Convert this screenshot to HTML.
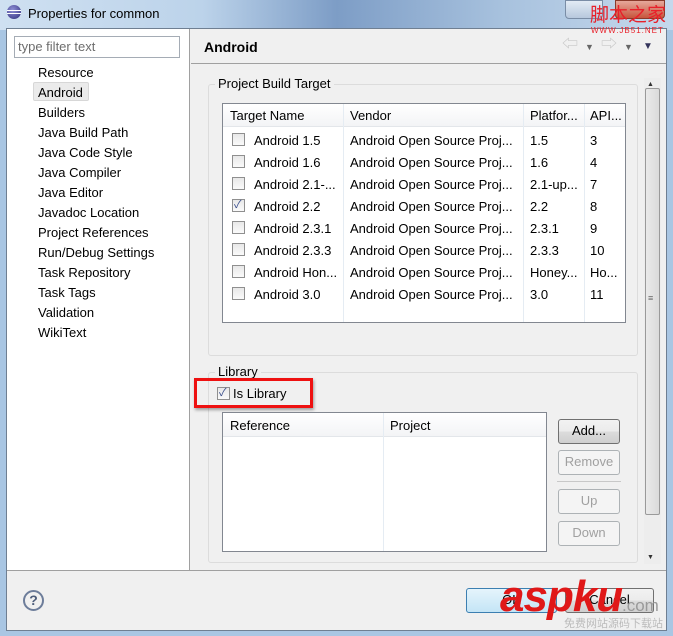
<!DOCTYPE html>
<html><head><style>
*{margin:0;padding:0;box-sizing:border-box}
body{width:673px;height:636px;overflow:hidden;background:#a9c6e3;font-family:"Liberation Sans","Noto Sans CJK SC",sans-serif;font-size:13px;color:#000;position:relative}
.a{position:absolute}
.t{position:absolute;white-space:nowrap;line-height:16px}
.cb{position:absolute;width:13px;height:13px;border:1px solid #8f8f8f;background:linear-gradient(#e8e8e8,#fafafa)}
.btn{position:absolute;border:1px solid #707070;border-radius:3px;background:linear-gradient(#f2f2f2 0%,#ebebeb 50%,#dcdcdc 51%,#cfcfcf);text-align:center;line-height:22px}
.dis{border-color:#adb2b5;background:#f4f4f4;color:#a0a0a0}
.z{z-index:5}
</style></head><body>
<div class="a" style="left:0;top:0;width:673px;height:30px;background:linear-gradient(90deg,#cfe0f1 0%,#bcd3ea 30%,#7d9dc6 50%,#a8c2de 75%,#c5d8ec 100%)"></div>
<div class="a" style="left:7px;top:5px;width:14px;height:14px;border-radius:50%;background:radial-gradient(circle at 40% 35%,#8f8fd6,#2c2c7a);"></div>
<div class="a" style="left:7px;top:10px;width:14px;height:1px;background:#fff"></div>
<div class="a" style="left:7px;top:13px;width:14px;height:1px;background:#fff"></div>
<div class="t" style="left:28px;top:6px;font-size:13px">Properties for common</div>
<div class="a" style="left:565px;top:0;width:38px;height:19px;border:1px solid #7a8da6;border-radius:0 0 4px 4px;background:linear-gradient(#e2ebf5,#b7c8dd)"></div>
<div class="a" style="left:615px;top:0;width:50px;height:19px;border:1px solid #8a3a2a;border-radius:0 0 4px 4px;background:linear-gradient(#e6a89a,#c8553d)"></div>
<!-- dialog body -->
<div class="a" style="left:6px;top:28px;width:661px;height:603px;background:#f0f0f0;border:1px solid #6f7f92"></div>
<div class="t z" style="left:590px;top:3px;font-size:19px;color:#e8202a;font-family:'Noto Sans CJK SC',sans-serif;line-height:22px">脚本之家</div>
<div class="t z" style="left:591px;top:26px;font-size:8px;color:#e8202a;letter-spacing:1px;line-height:9px">WWW.JB51.NET</div>
<!-- left panel -->
<div class="a" style="left:7px;top:29px;width:183px;height:541px;background:#fff;border-right:1px solid #a0a0a0"></div>
<div class="a" style="left:14px;top:36px;width:166px;height:22px;border:1px solid #a5acb5;background:#fff"></div>
<div class="t" style="left:18px;top:39px;color:#6d6d6d">type filter text</div>
<div class="a" style="left:33px;top:82px;width:56px;height:19px;background:#ebebeb;border:1px solid #d7d7d7;border-radius:2px"></div>
<div class="t" style="left:38px;top:63px;line-height:20px">Resource<br>Android<br>Builders<br>Java Build Path<br>Java Code Style<br>Java Compiler<br>Java Editor<br>Javadoc Location<br>Project References<br>Run/Debug Settings<br>Task Repository<br>Task Tags<br>Validation<br>WikiText</div>
<!-- right header -->
<div class="t" style="left:204px;top:39px;font-weight:bold;font-size:14px">Android</div>
<div class="t" style="left:562px;top:37px;color:#c8c8c8;font-size:16px">⇦</div>
<div class="t" style="left:585px;top:39px;color:#666;font-size:9px">▼</div>
<div class="t" style="left:601px;top:37px;color:#c8c8c8;font-size:16px">⇨</div>
<div class="t" style="left:624px;top:39px;color:#666;font-size:9px">▼</div>
<div class="t" style="left:643px;top:39px;color:#33335a;font-size:10px">▼</div>
<div class="a" style="left:191px;top:63px;width:475px;height:1px;background:#a0a0a0"></div>
<!-- scrollbar -->
<div class="a" style="left:644px;top:78px;width:17px;height:486px;background:#ededed"></div>
<div class="t" style="left:647px;top:77px;font-size:7px;color:#333">▲</div>
<div class="t" style="left:647px;top:550px;font-size:7px;color:#333">▼</div>
<div class="a" style="left:645px;top:88px;width:15px;height:427px;border:1px solid #9a9a9a;border-radius:2px;background:linear-gradient(90deg,#eaeaea,#dadada)"></div>
<div class="t" style="left:648px;top:290px;font-size:9px;color:#666">≡</div>
<!-- group 1 -->
<div class="a" style="left:208px;top:84px;width:430px;height:272px;border:1px solid #dcdcdc;border-radius:3px"></div>
<div class="t" style="left:215px;top:76px;background:#f0f0f0;padding:0 3px">Project Build Target</div>
<div class="a" style="left:222px;top:103px;width:404px;height:220px;border:1px solid #828790;background:#fff"></div>
<div class="a" style="left:223px;top:104px;width:402px;height:23px;background:linear-gradient(#fff,#f3f4f6);border-bottom:1px solid #e3e6ea"></div>
<div class="a" style="left:343px;top:104px;width:1px;height:218px;background:#e5ecf3"></div>
<div class="a" style="left:523px;top:104px;width:1px;height:218px;background:#e5ecf3"></div>
<div class="a" style="left:584px;top:104px;width:1px;height:218px;background:#e5ecf3"></div>
<div class="t" style="left:230px;top:108px">Target Name</div>
<div class="t" style="left:350px;top:108px">Vendor</div>
<div class="t" style="left:530px;top:108px">Platfor...</div>
<div class="t" style="left:590px;top:108px">API...</div>
<div class="t" style="left:254px;top:130px;line-height:22px">Android 1.5<br>Android 1.6<br>Android 2.1-...<br>Android 2.2<br>Android 2.3.1<br>Android 2.3.3<br>Android Hon...<br>Android 3.0</div>
<div class="t" style="left:350px;top:130px;line-height:22px">Android Open Source Proj...<br>Android Open Source Proj...<br>Android Open Source Proj...<br>Android Open Source Proj...<br>Android Open Source Proj...<br>Android Open Source Proj...<br>Android Open Source Proj...<br>Android Open Source Proj...</div>
<div class="t" style="left:530px;top:130px;line-height:22px">1.5<br>1.6<br>2.1-up...<br>2.2<br>2.3.1<br>2.3.3<br>Honey...<br>3.0</div>
<div class="t" style="left:590px;top:130px;line-height:22px">3<br>4<br>7<br>8<br>9<br>10<br>Ho...<br>11</div>
<div class="cb" style="left:232px;top:133px"></div>
<div class="cb" style="left:232px;top:155px"></div>
<div class="cb" style="left:232px;top:177px"></div>
<div class="cb" style="left:232px;top:199px"><span class="t" style="left:1px;top:-3px;font-size:11px;color:#3a4e8c">✓</span></div>
<div class="cb" style="left:232px;top:221px"></div>
<div class="cb" style="left:232px;top:243px"></div>
<div class="cb" style="left:232px;top:265px"></div>
<div class="cb" style="left:232px;top:287px"></div>
<!-- group 2 -->
<div class="a" style="left:208px;top:372px;width:430px;height:191px;border:1px solid #dcdcdc;border-radius:3px"></div>
<div class="t" style="left:215px;top:364px;background:#f0f0f0;padding:0 3px">Library</div>
<div class="a" style="left:194px;top:378px;width:119px;height:30px;border:3px solid #ee1111;box-shadow:1px 2px 3px rgba(0,0,0,.35)"></div>
<div class="cb" style="left:217px;top:387px"><span class="t" style="left:1px;top:-3px;font-size:11px;color:#3a4e8c">✓</span></div>
<div class="t" style="left:233px;top:386px">Is Library</div>
<div class="a" style="left:222px;top:412px;width:325px;height:140px;border:1px solid #828790;background:#fff"></div>
<div class="a" style="left:223px;top:413px;width:323px;height:24px;background:linear-gradient(#fff,#f3f4f6);border-bottom:1px solid #e3e6ea"></div>
<div class="a" style="left:383px;top:413px;width:1px;height:138px;background:#e5ecf3"></div>
<div class="t" style="left:230px;top:418px">Reference</div>
<div class="t" style="left:390px;top:418px">Project</div>
<div class="btn" style="left:558px;top:419px;width:62px;height:25px">Add...</div>
<div class="btn dis" style="left:558px;top:450px;width:62px;height:25px">Remove</div>
<div class="a" style="left:557px;top:481px;width:64px;height:1px;background:#c8c8c8"></div>
<div class="btn dis" style="left:558px;top:489px;width:62px;height:25px">Up</div>
<div class="btn dis" style="left:558px;top:521px;width:62px;height:25px">Down</div>
<!-- bottom bar -->
<div class="a" style="left:7px;top:570px;width:659px;height:1px;background:#a0a0a0"></div>
<div class="a" style="left:23px;top:590px;width:21px;height:21px;border:2px solid #6d7d9a;border-radius:50%;text-align:center;font-weight:bold;color:#4d5d7a;font-size:14px;line-height:17px">?</div>
<div class="btn" style="left:466px;top:588px;width:91px;height:25px;border-color:#3c7fb1;background:linear-gradient(#e5f4fc,#c4e5f6)">OK</div>
<div class="btn" style="left:565px;top:588px;width:89px;height:25px">Cancel</div>
<div class="t" style="left:500px;top:572px;font-size:44px;font-weight:bold;font-style:italic;color:#e01818;line-height:50px;letter-spacing:-1px">aspku</div>
<div class="t" style="left:622px;top:597px;font-size:17px;color:#999;line-height:18px">.com</div>
<div class="t" style="left:564px;top:617px;font-size:11px;color:#bbb;line-height:12px;font-family:'Noto Sans CJK SC',sans-serif">免费网站源码下载站</div>
</body></html>
